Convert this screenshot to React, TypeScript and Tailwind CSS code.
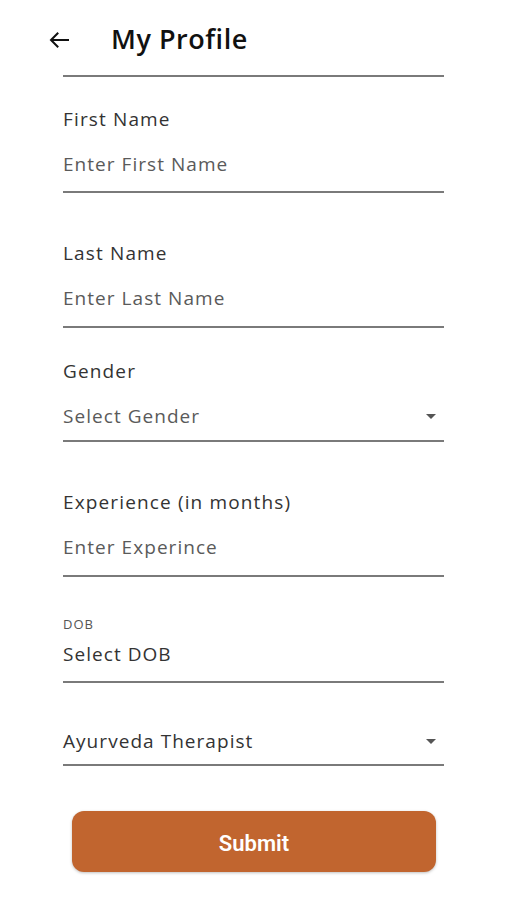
import { ReactNode } from "react";

const font = { fontFamily: '"Open Sans", "Noto Sans", sans-serif' };

function Caret() {
  return (
    <svg width="10" height="5" viewBox="0 0 10 5" className="shrink-0 mr-[8px]">
      <path d="M0 0h10L5 5z" fill="#555" />
    </svg>
  );
}

function Field({
  label,
  value,
  className,
  gap = "mt-[19px]",
  pb = "pb-[13px]",
  small,
  select,
  dark,
}: {
  label?: string;
  value: string;
  className: string;
  gap?: string;
  pb?: string;
  small?: boolean;
  select?: boolean;
  dark?: boolean;
}) {
  return (
    <div className={className}>
      {label &&
        (small ? (
          <div className="h-[16px] leading-[16px] text-[13px] tracking-[0.08em] text-[#555]">
            {label}
          </div>
        ) : (
          <div className="h-[24px] leading-[24px] text-[19px] tracking-[0.06em] text-[#333]">
            {label}
          </div>
        ))}
      <div
        className={`${label ? gap : ""} ${pb} flex items-center justify-between border-b-2 border-[#7a7a7a]`}
      >
        <span
          className={`h-[28px] leading-[28px] text-[19px] tracking-[0.055em] ${dark ? "text-[#333]" : "text-[#5a5a5a]"}`}
        >
          {value}
        </span>
        {select && <Caret />}
      </div>
    </div>
  );
}

function Screen({ children }: { children: ReactNode }) {
  return (
    <div className="min-h-[900px] w-[507px] bg-white" style={font}>
      {children}
    </div>
  );
}

export default function App() {
  return (
    <Screen>
      <div className="flex items-center h-[80px] -mb-[5px]">
        <div className="ml-[49px] w-[20px] h-[16px] flex items-center">
          <svg width="20" height="16" viewBox="0 0 20 16" fill="none">
            <path
              d="M19 8H2.5M8.5 1.5L2 8l6.5 6.5"
              stroke="#111"
              strokeWidth="2"
              strokeLinecap="square"
            />
          </svg>
        </div>
        <h1 className="ml-[42px] text-[27px] tracking-[0.02em] font-semibold text-[#111] -mt-[2px]">
          My Profile
        </h1>
      </div>
      <div className="mx-[63px] w-[381px]">
        <div className="border-b-2 border-[#7a7a7a]" />
        <Field className="mt-[30px]" label="First Name" value="Enter First Name" />
        <Field className="mt-[48px]" label="Last Name" value="Enter Last Name" pb="pb-[14px]" />
        <Field className="mt-[31px]" label="Gender" value="Select Gender" pb="pb-[10px]" select />
        <Field
          className="mt-[48px]"
          label="Experience (in months)"
          value="Enter Experince"
          pb="pb-[14px]"
        />
        <Field className="mt-[39px]" label="DOB" value="Select DOB" small gap="mt-[8px]" dark />
        <Field className="mt-[44px]" value="Ayurveda Therapist" pb="pb-[9px]" select dark />
        <button
          className="mt-[45px] mx-[9px] w-[364px] h-[61px] pt-[3px] rounded-[12px] bg-[#c1652f] text-white text-[22px] font-semibold shadow-[0_1px_3px_rgba(0,0,0,0.25)]"
          style={{ fontFamily: 'Roboto, "Noto Sans", sans-serif' }}
        >
          Submit
        </button>
      </div>
    </Screen>
  );
}
